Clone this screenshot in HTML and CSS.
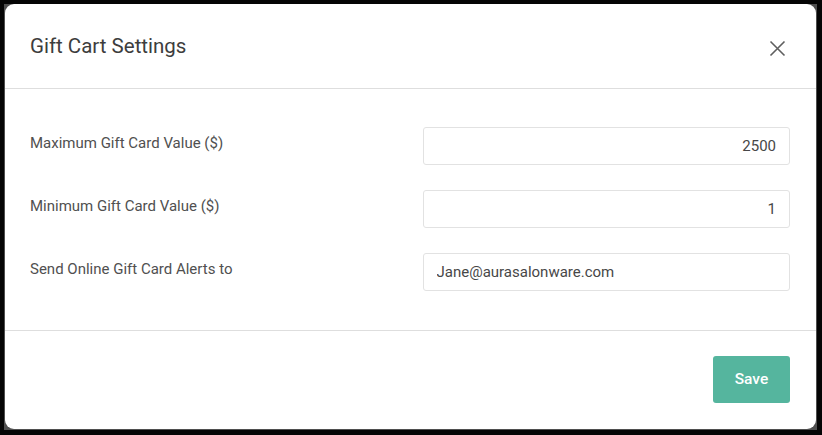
FILE: index.html
```html
<!DOCTYPE html>
<html lang="en">
<head>
    <meta charset="UTF-8">
    <meta name="viewport" content="width=device-width, initial-scale=1.0">
    <title>Gift Cart Settings</title>
    <link rel="stylesheet" href="styles.css">
</head>
<body>

    <div class="frame">
        <div class="modal">
            <div class="modal-header">
                <h2>Gift Cart Settings</h2>
                <button class="close" aria-label="Close">
                    <svg width="17" height="17" viewBox="0 0 17 17">
                        <path d="M1.5 1.5 L15.5 15.5 M15.5 1.5 L1.5 15.5" stroke="#5f5f5f" stroke-width="1.6" fill="none"/>
                    </svg>
                </button>
            </div>

            <div class="modal-body">
                <label for="max_value">Maximum Gift Card Value ($)</label>
                <input type="text" id="max_value" class="num" value="2500">

                <label for="min_value">Minimum Gift Card Value ($)</label>
                <input type="text" id="min_value" class="num" value="1">

                <label for="alert_email">Send Online Gift Card Alerts to</label>
                <input type="text" id="alert_email" value="Jane@aurasalonware.com">
            </div>

            <div class="modal-footer">
                <button class="save">Save</button>
            </div>
        </div>
    </div>

</body>
</html>
```

FILE: styles.css
```css
* { box-sizing: border-box; }
html, body {
    margin: 0;
    height: 100%;
}
body {
    font-family: 'Roboto', 'Liberation Sans', sans-serif;
    background: #000;
}
.frame {
    height: 435px;
    border-style: solid;
    border-color: #050505;
    border-width: 4px 5px 5px 4px;
    background: #4f4f4f;
    padding: 0 1px 1px 1px;
    display: flex;
}
.modal {
    flex: 1;
    background: #fff;
    border-radius: 9px;
    display: flex;
    flex-direction: column;
}
.modal-header {
    height: 85px;
    display: flex;
    align-items: center;
    justify-content: space-between;
    padding: 0 30px 0 25px;
    border-bottom: 1px solid #dedede;
}
.modal-header h2 {
    margin: 0 0 1px;
    font-size: 20.5px;
    font-weight: 400;
    color: #3d3d3d;
}
.close {
    border: none;
    background: none;
    padding: 0;
    margin-top: 4px;
    width: 17px;
    height: 17px;
    cursor: pointer;
}
.modal-body {
    flex: 1;
    display: grid;
    grid-template-columns: 1fr 1fr;
    column-gap: 25px;
    row-gap: 25px;
    align-content: start;
    padding: 38px 26px 0 25px;
}
label {
    padding-top: 7px;
    font-size: 15px;
    color: #505050;
}
input {
    height: 38px;
    padding: 0 13px;
    border: 1px solid #e2e2e2;
    border-radius: 3px;
    font-family: inherit;
    font-size: 15px;
    color: #474747;
}
input.num { text-align: right; }
.modal-footer {
    height: 99px;
    display: flex;
    justify-content: flex-end;
    align-items: center;
    padding: 0 26px 2px;
    border-top: 1px solid #dedede;
}
.save {
    width: 77px;
    height: 47px;
    border: none;
    border-radius: 3px;
    background: #55b59e;
    color: #fff;
    font-family: inherit;
    font-size: 15.5px;
    font-weight: 500;
    cursor: pointer;
}
```
